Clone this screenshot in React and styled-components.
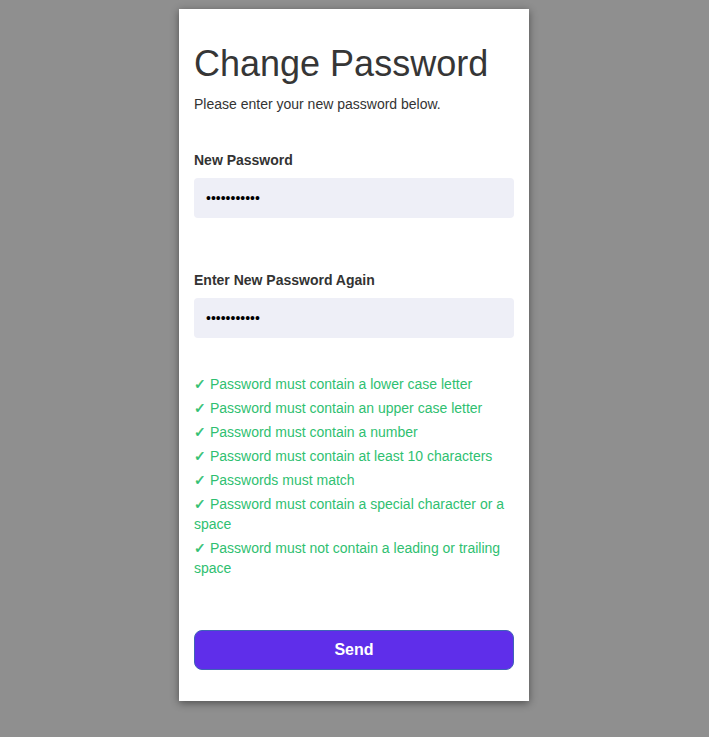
import React, { useState } from "react";
import styled, { createGlobalStyle } from "styled-components";

const GlobalStyle = createGlobalStyle`
  html, body {
    margin: 0;
    padding: 0;
    background: #8f8f8f;
    font-family: "Liberation Sans", Arial, sans-serif;
  }
  * { box-sizing: border-box; }
`;

const Page = styled.div`
  min-height: 737px;
  display: flex;
  justify-content: center;
  align-items: flex-start;
  padding: 9px 1px 0 0;
`;

const Card = styled.form`
  width: 350px;
  background: #fff;
  padding: 34px 15px 31px;
  box-shadow: 0 2px 8px rgba(0, 0, 0, 0.45);
  display: flex;
  flex-direction: column;
`;

const Title = styled.h1`
  margin: 0;
  font-size: 36px;
  font-weight: 400;
  line-height: 41px;
  color: #363636;
`;

const Subtitle = styled.p`
  margin: 12px 0 0;
  font-size: 14px;
  line-height: 16px;
  color: #333;
`;

const Field = styled.div`
  margin-top: ${(p) => p.$top}px;
  display: flex;
  flex-direction: column;
  gap: 10px;
`;

const Label = styled.label`
  font-size: 14px;
  font-weight: 700;
  line-height: 16px;
  color: #333;
`;

const Input = styled.input`
  height: 40px;
  width: 100%;
  border: none;
  border-radius: 4px;
  background: #eeeff7;
  padding: 0 12px;
  font-family: "Liberation Sans", Arial, sans-serif;
  font-size: 14px;
  color: #000;
  outline: none;
`;

const Rules = styled.ul`
  list-style: none;
  margin: 36px 0 0;
  padding: 0;
  display: flex;
  flex-direction: column;
  gap: 4px;
`;

const Rule = styled.li`
  font-size: 14px;
  line-height: 20px;
  color: ${(p) => (p.$ok ? "#2fbf71" : "#d9534f")};
`;

const Tick = styled.span`
  line-height: 0;
  font-size: 14px;
  -webkit-text-stroke: 0.5px currentColor;
`;

const SendButton = styled.button`
  margin-top: 52px;
  height: 40px;
  width: 100%;
  border: 1px solid #3f63b8;
  border-radius: 8px;
  background: #5f2eea;
  color: #fff;
  font-family: "Liberation Sans", Arial, sans-serif;
  font-size: 16px;
  font-weight: 700;
  cursor: pointer;
`;

const rules = [
  "Password must contain a lower case letter",
  "Password must contain an upper case letter",
  "Password must contain a number",
  "Password must contain at least 10 characters",
  "Passwords must match",
  "Password must contain a special character or a space",
  "Password must not contain a leading or trailing space",
];

export default function App() {
  const [pw, setPw] = useState("Abcdefg12!x");
  const [pw2, setPw2] = useState("Abcdefg12!x");

  return (
    <>
      <GlobalStyle />
      <Page>
        <Card onSubmit={(e) => e.preventDefault()}>
          <Title>Change Password</Title>
          <Subtitle>Please enter your new password below.</Subtitle>
          <Field $top={40}>
            <Label htmlFor="pw">New Password</Label>
            <Input
              id="pw"
              type="password"
              value={pw}
              onChange={(e) => setPw(e.target.value)}
            />
          </Field>
          <Field $top={54}>
            <Label htmlFor="pw2">Enter New Password Again</Label>
            <Input
              id="pw2"
              type="password"
              value={pw2}
              onChange={(e) => setPw2(e.target.value)}
            />
          </Field>
          <Rules>
            {rules.map((r) => (
              <Rule key={r} $ok>
                <Tick>✓</Tick> {r}
              </Rule>
            ))}
          </Rules>
          <SendButton type="submit">Send</SendButton>
        </Card>
      </Page>
    </>
  );
}
